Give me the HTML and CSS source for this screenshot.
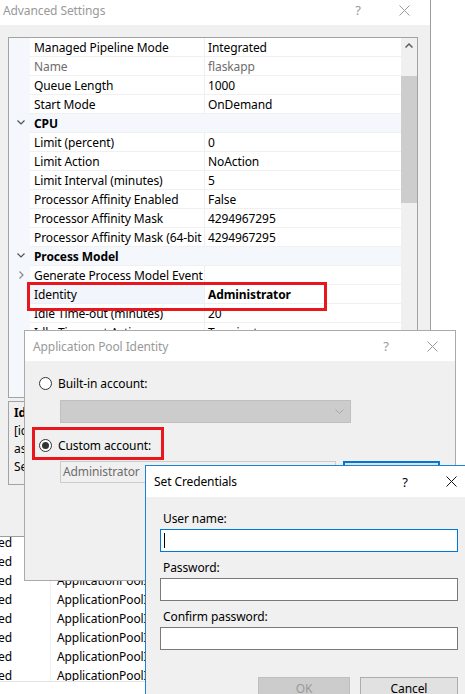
FILE: index.html
```html
<!DOCTYPE html>
<html>
<head>
<meta charset="utf-8">
<title>Advanced Settings</title>
<link rel="stylesheet" href="styles.css">
</head>
<body>
<div class="desk">

  <section class="win iis">
    <div class="list">
      <div class="lrow"><div class="c1"><span>Started</span></div><div class="c2">ApplicationPoolIdentity</div></div>
      <div class="lrow"><div class="c1"><span>Started</span></div><div class="c2">ApplicationPoolIdentity</div></div>
      <div class="lrow"><div class="c1"><span>Started</span></div><div class="c2">ApplicationPoolIdentity</div></div>
      <div class="lrow"><div class="c1"><span>Started</span></div><div class="c2">ApplicationPoolIdentity</div></div>
      <div class="lrow"><div class="c1"><span>Started</span></div><div class="c2">ApplicationPoolIdentity</div></div>
      <div class="lrow"><div class="c1"><span>Started</span></div><div class="c2">ApplicationPoolIdentity</div></div>
      <div class="lrow"><div class="c1"><span>Started</span></div><div class="c2">ApplicationPoolIdentity</div></div>
      <div class="lrow"><div class="c1"><span>Started</span></div><div class="c2">ApplicationPoolIdentity</div></div>
    </div>
  </section>

  <section class="win adv">
    <header class="tbar adv-bar">
      <span class="ttl inactive">Advanced Settings</span>
      <span class="tbtn q inactive">?</span>
      <span class="tbtn x"><svg width="11" height="11" viewBox="0 0 11 11"><path d="M0.5 0.5L10.5 10.5M10.5 0.5L0.5 10.5" stroke="#9a9a9a" stroke-width="1" fill="none"/></svg></span>
    </header>
    <div class="advbody">
      <div class="grid">
        <div class="rows">
          <div class="row"><span class="g"></span><span class="n">Managed Pipeline Mode</span><span class="v">Integrated</span></div>
          <div class="row ro"><span class="g"></span><span class="n">Name</span><span class="v">flaskapp</span></div>
          <div class="row"><span class="g"></span><span class="n">Queue Length</span><span class="v">1000</span></div>
          <div class="row"><span class="g"></span><span class="n">Start Mode</span><span class="v">OnDemand</span></div>
          <div class="row cat"><span class="g"><svg width="8" height="5" viewBox="0 0 8 5"><path d="M0.5 0.5L4 4L7.5 0.5" stroke="#505050" stroke-width="1.2" fill="none"/></svg></span><span class="cn">CPU</span></div>
          <div class="row"><span class="g"></span><span class="n">Limit (percent)</span><span class="v">0</span></div>
          <div class="row"><span class="g"></span><span class="n">Limit Action</span><span class="v">NoAction</span></div>
          <div class="row"><span class="g"></span><span class="n">Limit Interval (minutes)</span><span class="v">5</span></div>
          <div class="row"><span class="g"></span><span class="n">Processor Affinity Enabled</span><span class="v">False</span></div>
          <div class="row"><span class="g"></span><span class="n">Processor Affinity Mask</span><span class="v">4294967295</span></div>
          <div class="row"><span class="g"></span><span class="n">Processor Affinity Mask (64-bit option)</span><span class="v">4294967295</span></div>
          <div class="row cat"><span class="g"><svg width="8" height="5" viewBox="0 0 8 5"><path d="M0.5 0.5L4 4L7.5 0.5" stroke="#505050" stroke-width="1.2" fill="none"/></svg></span><span class="cn">Process Model</span></div>
          <div class="row"><span class="g sub"><svg width="5" height="8" viewBox="0 0 5 8"><path d="M0.5 0.5L4 4L0.5 7.5" stroke="#8a8a8a" stroke-width="1.2" fill="none"/></svg></span><span class="n">Generate Process Model Event Log Entry</span><span class="v"></span></div>
          <div class="row sel"><span class="g"></span><span class="n">Identity</span><span class="v b">Administrator</span></div>
          <div class="row"><span class="g"></span><span class="n">Idle Time-out (minutes)</span><span class="v">20</span></div>
          <div class="row"><span class="g"></span><span class="n">Idle Time-out Action</span><span class="v">Terminate</span></div>
          <div class="row"><span class="g"></span><span class="n">Load User Profile</span><span class="v">True</span></div>
          <div class="row"><span class="g"></span><span class="n">Maximum Worker Processes</span><span class="v">1</span></div>
          <div class="row"><span class="g"></span><span class="n">Ping Enabled</span><span class="v">True</span></div>
        </div>
        <div class="sbar">
          <span class="sup"><svg width="8" height="5" viewBox="0 0 8 5"><path d="M0.5 4.5L4 1L7.5 4.5" stroke="#606060" stroke-width="1.5" fill="none"/></svg></span>
          <span class="thumb"></span>
        </div>
      </div>
      <div class="desc">
        <div class="dl b">Identity</div>
        <div class="dl">[identityType, username, password] Configures the application pool to run</div>
        <div class="dl">as built-in account, i.e. Application Pool Identity (recommended), Network</div>
        <div class="dl">Service, Local System, Local Service, or as a specific user identity.</div>
      </div>
    </div>
  </section>

  <div class="mark mark-identity"></div>

  <section class="win api">
    <header class="tbar">
      <span class="ttl inactive">Application Pool Identity</span>
      <span class="tbtn q inactive">?</span>
      <span class="tbtn x"><svg width="11" height="11" viewBox="0 0 11 11"><path d="M0.5 0.5L10.5 10.5M10.5 0.5L0.5 10.5" stroke="#9a9a9a" stroke-width="1" fill="none"/></svg></span>
    </header>
    <div class="apibody">
      <label class="opt"><span class="radio"></span><span>Built-in account:</span></label>
      <div class="combo"><svg width="9" height="5" viewBox="0 0 9 5"><path d="M0.5 0.5L4.5 4.5L8.5 0.5" stroke="#a8a8a8" stroke-width="1" fill="none"/></svg></div>
      <label class="opt opt2"><span class="radio on"></span><span>Custom account:</span></label>
      <div class="acct">
        <div class="tbox dis">Administrator</div>
        <div class="btn setbtn">Set...</div>
      </div>
    </div>
  </section>

  <div class="mark mark-custom"></div>

  <section class="win sc">
    <header class="tbar">
      <span class="ttl">Set Credentials</span>
      <span class="tbtn q">?</span>
      <span class="tbtn x"><svg width="11" height="11" viewBox="0 0 11 11"><path d="M0.5 0.5L10.5 10.5M10.5 0.5L0.5 10.5" stroke="#111" stroke-width="1" fill="none"/></svg></span>
    </header>
    <div class="scbody">
      <div class="fld">
        <div class="lbl">User name:</div>
        <div class="inp focus"><span class="caret"></span></div>
      </div>
      <div class="fld">
        <div class="lbl">Password:</div>
        <div class="inp"></div>
      </div>
      <div class="fld">
        <div class="lbl">Confirm password:</div>
        <div class="inp"></div>
      </div>
      <div class="btns">
        <div class="btn ok">OK</div>
        <div class="btn cancel">Cancel</div>
      </div>
    </div>
  </section>

</div>
</body>
</html>
```

FILE: styles.css
```css
* { box-sizing: border-box; margin: 0; padding: 0; }
html, body { width: 465px; height: 694px; overflow: hidden; background: #fff; }
body { font-family: "Noto Sans", "Open Sans", sans-serif; font-size: 12px; color: #000; letter-spacing: -0.1px; }

.desk { position: relative; width: 465px; height: 694px; overflow: hidden; background: #fff; }

.win { position: absolute; display: flex; flex-direction: column; }

/* IIS main window list (background) */
.iis { left: 0; top: 533px; width: 431px; height: 161px; background: #fff; }
.list { height: 149px; overflow: hidden; border-bottom: 1px solid #e3e3e3; }
.lrow { display: flex; height: 19px; line-height: 19px; }
.c1 { width: 51px; border-right: 1px solid #f0f0f0; display: flex; justify-content: flex-end; padding-right: 38px; white-space: nowrap; }
.c2 { padding-left: 6px; white-space: nowrap; }

/* title bars */
.tbar { height: 30px; background: #fff; display: flex; align-items: center; flex: none; }
.ttl { flex: 1; padding-left: 8px; white-space: nowrap; }
.inactive { color: #999; }
.tbtn { width: 46px; height: 100%; display: flex; align-items: center; justify-content: center; font-size: 13px; }

/* Advanced Settings window */
.adv { left: -1px; top: -6px; width: 432px; height: 543px; background: #f0f0f0; border: 1px solid #9d9d9d; }
.adv-bar { padding-right: 3px; }
.adv-bar .ttl { padding-left: 3px; padding-top: 1px; }
.advbody { flex: 1; padding: 12px 0 0 8px; display: flex; flex-direction: column; gap: 3px; }
.grid { width: 410px; height: 361px; border: 1px solid #a3a3a3; background: #fff; display: flex; overflow: hidden; flex: none; }
.rows { width: 392px; display: flex; flex-direction: column; }
.row { display: flex; height: 19px; line-height: 20px; flex: none; overflow: hidden; }
.g { width: 21px; flex: none; background: #f4f7fc; display: flex; align-items: center; justify-content: center; padding-bottom: 1px; }
.g.sub { padding-left: 4px; }
.n { width: 175px; flex: none; padding-left: 4px; border-right: 1px solid #efefef; border-bottom: 1px solid #f0f0f0; white-space: nowrap; overflow: hidden; }
.v { flex: 1; padding-left: 3px; border-bottom: 1px solid #f0f0f0; white-space: nowrap; overflow: hidden; }
.ro .n, .ro .v { color: #6d6d6d; }
.cat { background: #f4f7fc; }
.cat .g { padding-left: 2px; padding-bottom: 2px; }
.cn { padding-left: 4px; font-weight: bold; border-bottom: 1px solid #f0f0f0; flex: 1; }
.sel .n { background: #f2f5fb; }
.b { font-weight: bold; }

.sbar { width: 16px; background: #f0f0f0; display: flex; flex-direction: column; flex: none; }
.sup { height: 17px; display: flex; align-items: center; justify-content: center; padding-bottom: 2px; }
.thumb { margin-top: 21px; height: 127px; background: #cdcdcd; }

.desc { width: 410px; height: 84px; border: 1px solid #a3a3a3; padding: 2px 0 0 5px; overflow: hidden; flex: none; }
.dl { line-height: 18px; white-space: nowrap; }

/* annotation boxes */
.mark { position: absolute; border: 3px solid #e8161d; }
.mark-identity { left: 27px; top: 282px; width: 300px; height: 29px; }
.mark-custom { left: 32px; top: 427px; width: 132px; height: 33px; }

/* Application Pool Identity dialog */
.api { left: 24px; top: 330px; width: 432px; height: 251px; background: #f0f0f0; border: 1px solid #aaa; }
.api .tbar .ttl { padding-left: 8px; }
.apibody { padding: 13px 0 0 14px; display: flex; flex-direction: column; }
.opt { display: flex; align-items: center; height: 19px; gap: 6px; }
.opt2 { margin-top: 13px; }
.radio { width: 13px; height: 13px; border: 1px solid #333; border-radius: 50%; background: #fff; display: flex; align-items: center; justify-content: center; }
.radio.on::after { content: ""; width: 7px; height: 7px; border-radius: 50%; background: #333; }
.combo { margin: 7px 0 0 21px; width: 291px; height: 23px; background: #cccccc; border: 1px solid #bfbfbf; display: flex; align-items: center; justify-content: flex-end; padding-right: 6px; }
.acct { display: flex; gap: 7px; margin: 6px 0 0 21px; }
.tbox { width: 276px; height: 22px; line-height: 20px; border: 1px solid #cccccc; background: #f0f0f0; padding-left: 2px; color: #6d6d6d; }
.btn { height: 23px; display: flex; align-items: center; justify-content: center; }
.setbtn { width: 97px; height: 24px; border: 2px solid #0078d7; background: #e1e1e1; }

/* Set Credentials dialog */
.sc { left: 145px; top: 465px; width: 330px; height: 240px; background: #f0f0f0; border: 1px solid #1883d7; }
.sc .tbar { height: 31px; }
.scbody { padding: 13px 16px 0 14px; display: flex; flex-direction: column; gap: 7px; }
.fld { display: flex; flex-direction: column; gap: 1px; }
.lbl { line-height: 18px; padding-left: 3px; }
.inp { height: 23px; border: 1px solid #7a7a7a; background: #fff; padding: 3px 0 0 3px; }
.inp.focus { border-color: #0078d7; }
.caret { display: block; width: 1px; height: 15px; background: #000; }
.btns { display: flex; justify-content: flex-end; gap: 10px; margin-top: 20px; }
.ok { width: 92px; background: #cccccc; border: 1px solid #bfbfbf; color: #9a9a9a; }
.cancel { width: 98px; background: #e1e1e1; border: 1px solid #adadad; }
```
